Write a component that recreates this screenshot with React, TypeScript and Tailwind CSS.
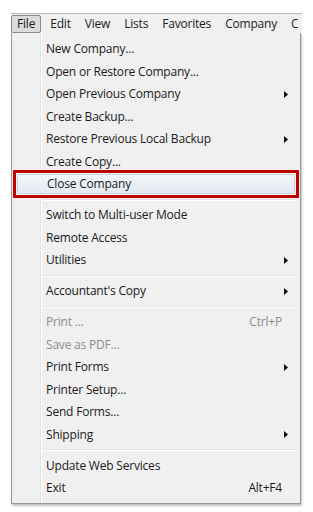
import React from 'react'

type Item = { label: string; shortcut?: string; sub?: boolean; disabled?: boolean; selected?: boolean } | 'sep'

const items: Item[] = [
  { label: 'New Company...' },
  { label: 'Open or Restore Company...' },
  { label: 'Open Previous Company', sub: true },
  { label: 'Create Backup...' },
  { label: 'Restore Previous Local Backup', sub: true },
  { label: 'Create Copy...' },
  { label: 'Close Company', selected: true },
  'sep',
  { label: 'Switch to Multi-user Mode' },
  { label: 'Remote Access' },
  { label: 'Utilities', sub: true },
  'sep',
  { label: "Accountant's Copy", sub: true },
  'sep',
  { label: 'Print ...', shortcut: 'Ctrl+P', disabled: true },
  { label: 'Save as PDF...', disabled: true },
  { label: 'Print Forms', sub: true },
  { label: 'Printer Setup...' },
  { label: 'Send Forms...' },
  { label: 'Shipping', sub: true },
  'sep',
  { label: 'Update Web Services' },
  { label: 'Exit', shortcut: 'Alt+F4' },
]

const menus = ['Edit', 'View', 'Lists', 'Favorites', 'Company', 'C']

const App: React.FC = () => {
  return (
    <div
      className="w-[313px] h-[512px] bg-white pt-[13px] pl-[11px] overflow-hidden tracking-[-0.2px]"
      style={{ fontFamily: '"Open Sans", "Noto Sans", sans-serif' }}
    >
      <div className="w-[291px]">
        {/* menu bar */}
        <div className="h-[20px] border-t border-[#b9b9b9] bg-[#f0f0f0] flex items-center text-[12px] text-[#1b1b1b] whitespace-nowrap overflow-hidden">
          <div className="h-[18px] px-[5px] flex items-center border border-[#8a8a8a] rounded-[2px] bg-[#dcdcdc]">File</div>
          <div className="flex gap-[14px] pl-[9px]">
            {menus.map((m) => (
              <span key={m}>{m}</span>
            ))}
          </div>
        </div>

        {/* dropdown */}
        <div className="relative border border-[#979797] border-t-0 bg-[#f0f0f0] pb-[3px] shadow-[1px_2px_2px_rgba(0,0,0,0.25)] w-[290px]">
          <div className="absolute top-0 bottom-0 left-[28px] w-[2px] border-l border-[#e2e3e3] bg-white" />
          <div className="relative pt-[5px]">
            {items.map((it, i) =>
              it === 'sep' ? (
                <div key={i} className="h-[8.5px] flex items-center pl-[31px] pr-[2px]">
                  <div className="w-full h-[2px] border-t border-[#e2e3e3] bg-white" />
                </div>
              ) : (
                <div
                  key={i}
                  className={
                    it.selected
                      ? 'h-[28px] -my-[2.75px] mx-[1px] border-[3px] border-[#c00000] p-[1px] relative'
                      : 'h-[22.5px] flex items-center'
                  }
                >
                  {it.selected ? (
                    <div className="h-full flex items-center pl-[29px] rounded-[2px] border border-[#c8d6e6] bg-gradient-to-b from-[#f3f6fa] to-[#e3eaf2] text-[12px] text-[#1b1b1b]">
                      {it.label}
                    </div>
                  ) : (
                    <>
                      <span
                        className={`pl-[34px] text-[12px] flex-1 ${it.disabled ? 'text-[#8d8d8d]' : 'text-[#1b1b1b]'}`}
                      >
                        {it.label}
                      </span>
                      {it.shortcut && (
                        <span className={`text-[12px] pr-[18px] ${it.disabled ? 'text-[#8d8d8d]' : 'text-[#1b1b1b]'}`}>
                          {it.shortcut}
                        </span>
                      )}
                      {it.sub && (
                        <svg width="4" height="7" viewBox="0 0 4 7" className="mr-[12px]">
                          <path d="M0 0 L4 3.5 L0 7 Z" fill="#111" />
                        </svg>
                      )}
                    </>
                  )}
                </div>
              )
            )}
          </div>
        </div>
      </div>
    </div>
  )
}

export default App
